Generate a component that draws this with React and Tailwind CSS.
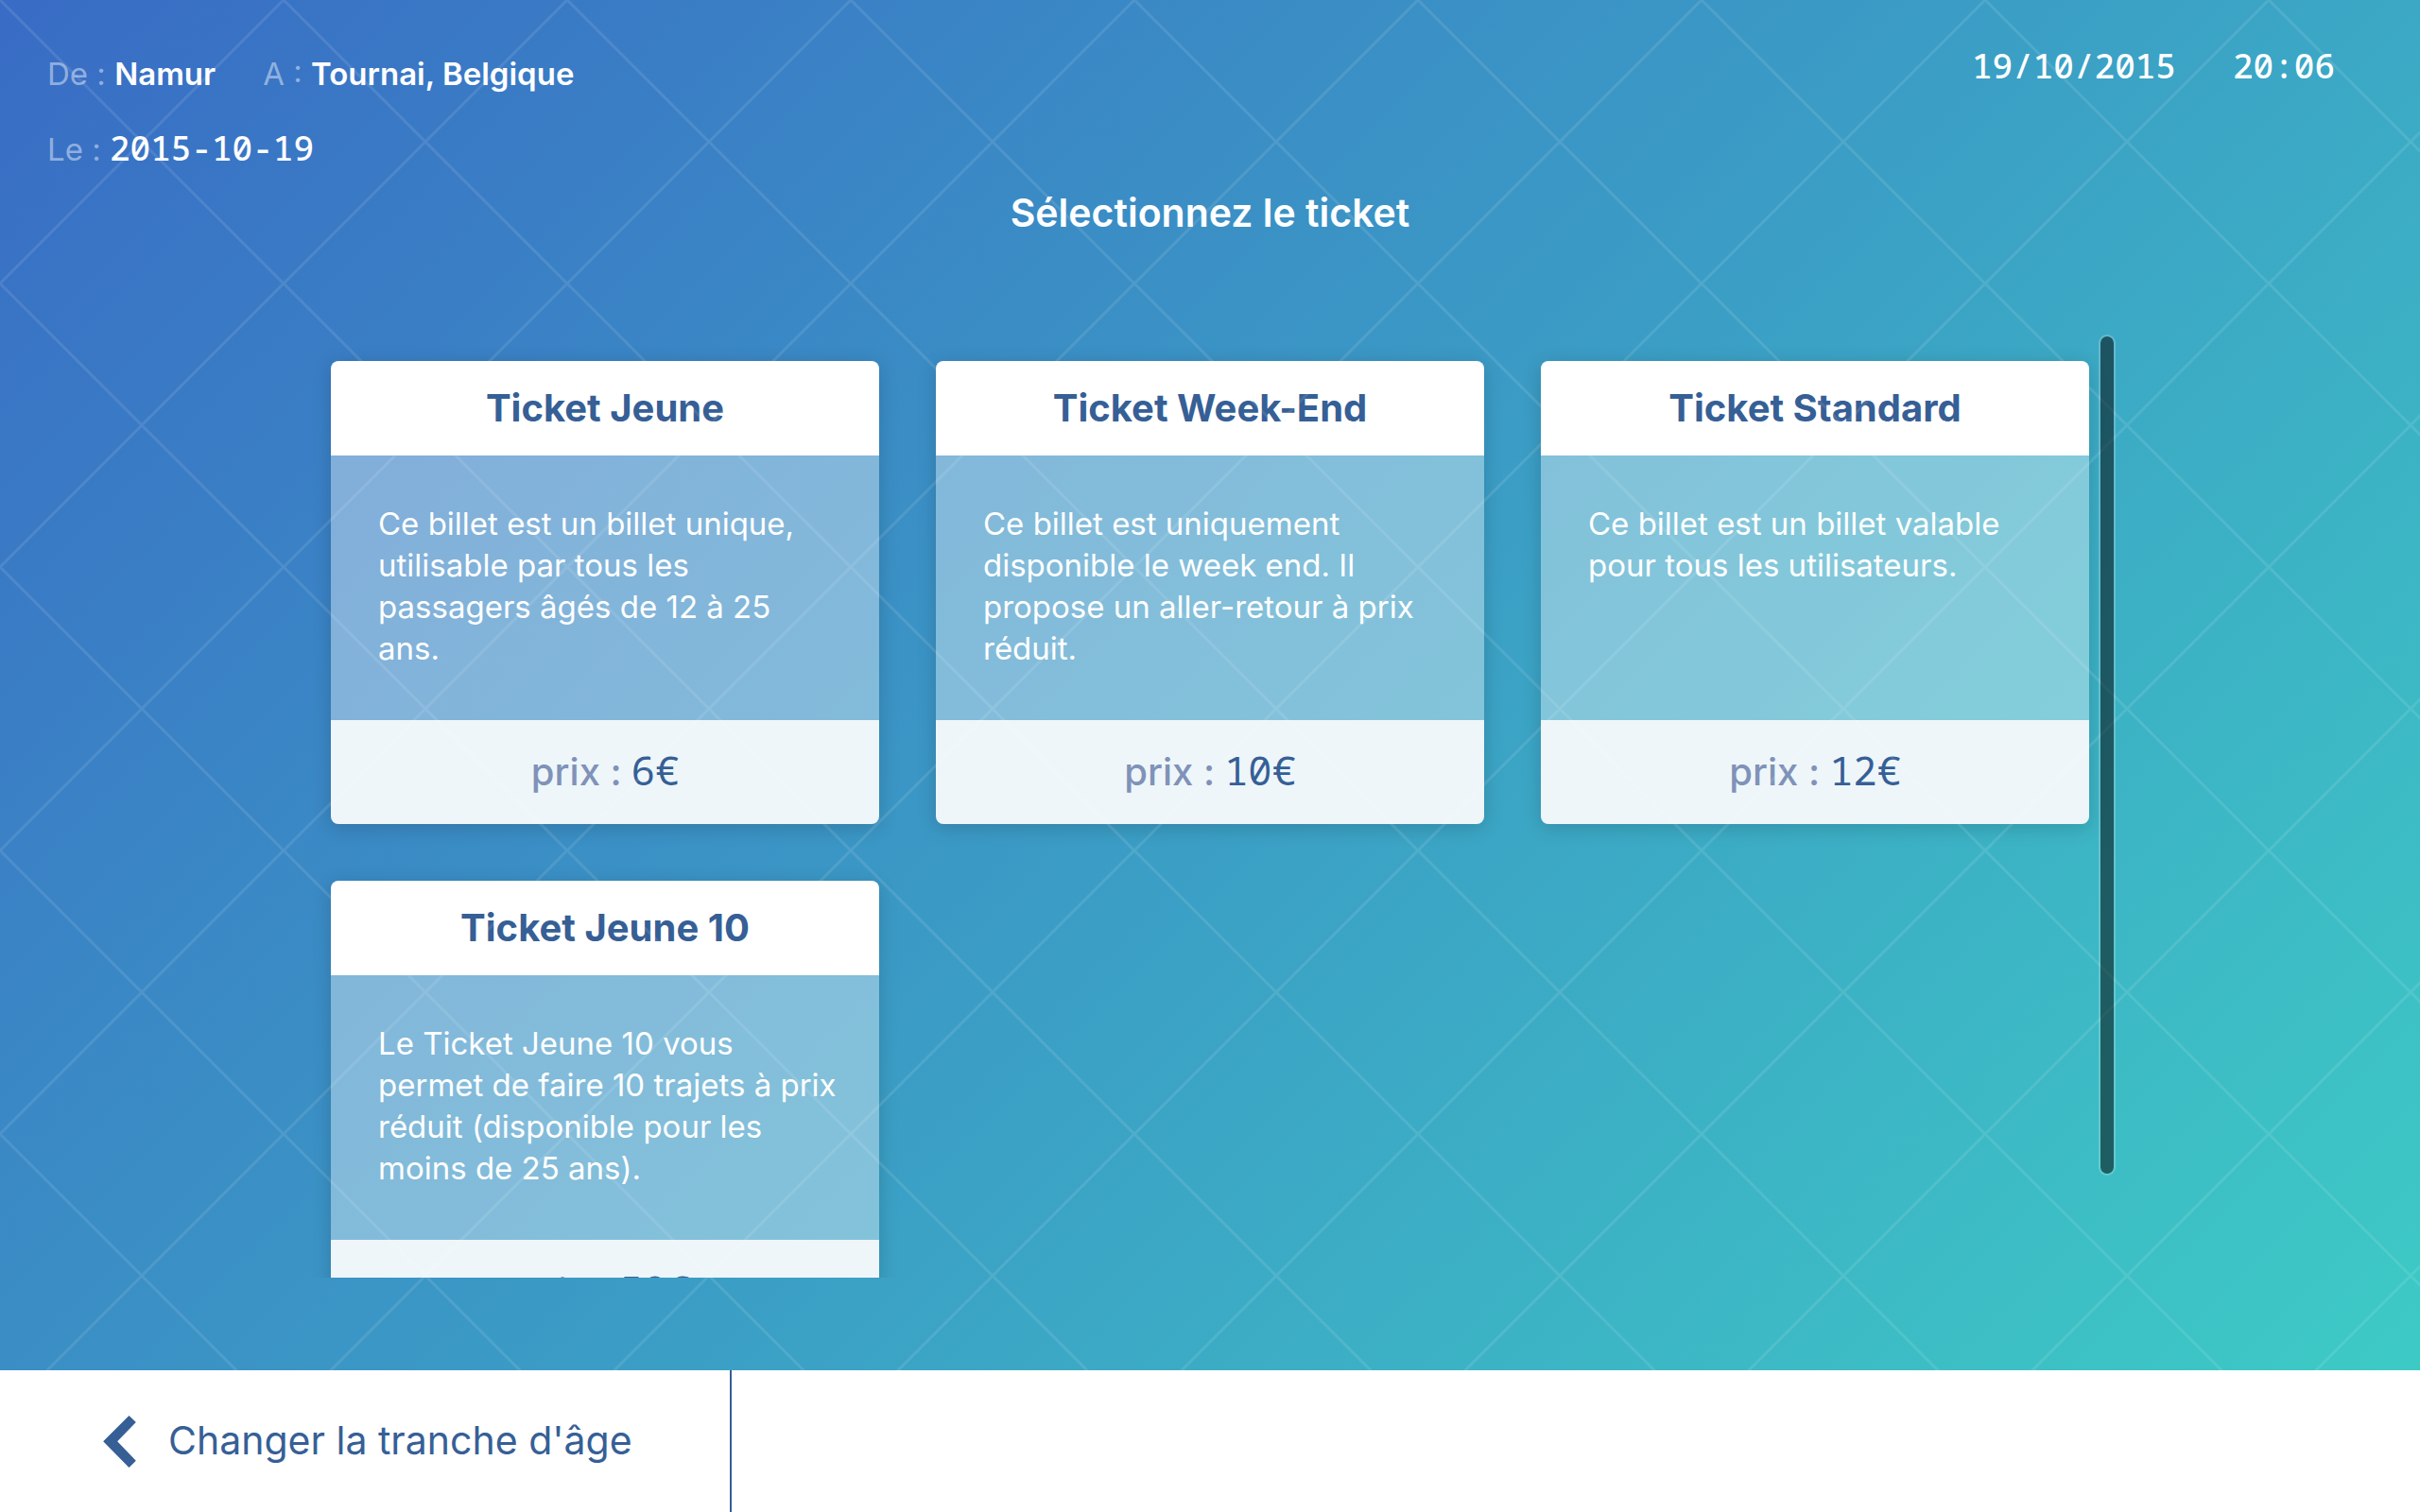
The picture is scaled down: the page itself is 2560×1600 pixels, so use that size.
import React from "react";

const TICKETS = [
  {
    title: "Ticket Jeune",
    lines: ["Ce billet est un billet unique,", "utilisable par tous les", "passagers âgés de 12 à 25", "ans."],
    price: "6€",
  },
  {
    title: "Ticket Week-End",
    lines: ["Ce billet est uniquement", "disponible le week end. Il", "propose un aller-retour à prix", "réduit."],
    price: "10€",
  },
  {
    title: "Ticket Standard",
    lines: ["Ce billet est un billet valable", "pour tous les utilisateurs."],
    price: "12€",
  },
  {
    title: "Ticket Jeune 10",
    lines: ["Le Ticket Jeune 10 vous", "permet de faire 10 trajets à prix", "réduit (disponible pour les", "moins de 25 ans)."],
    price: "50€",
  },
];

function TicketCard({ title, lines, price }) {
  return (
    <button
      type="button"
      className="flex flex-col rounded-lg text-left shadow-[0_4px_20px_rgba(0,0,0,0.16)]"
    >
      <span className="w-full rounded-t-lg bg-white text-center text-[40px] leading-[100px] font-bold text-[#365f96]">
        {title}
      </span>
      <span className="min-h-[280px] w-full bg-white/37 py-[50px] pr-8 pl-[50px] text-[33px] leading-[44px] whitespace-pre-line text-white">
        {lines.join("\n")}
      </span>
      <span className="flex w-full items-baseline justify-center gap-2.5 rounded-b-lg bg-[#eef6fa] text-[40px] leading-[110px] font-medium text-[#8092b8]">
        prix :
        <span className="font-['Noto_Sans_Mono',monospace] text-[42px] leading-[50px] font-normal text-[#365f96]">
          {price}
        </span>
      </span>
    </button>
  );
}

function Criterion({ label, children }) {
  return (
    <p className="text-[33px] leading-[80px] font-semibold text-white">
      <span className="font-normal text-white/45">{label} : </span>
      {children}
    </p>
  );
}

export default function App() {
  return (
    <div className="flex h-screen flex-col bg-white font-['Inter',sans-serif]">
      <div className="relative flex min-h-0 flex-1 flex-col bg-[linear-gradient(135deg,#396cc5,#3dcac5)]">
        <header className="flex justify-between px-[50px] pt-[38px]">
          <div>
            <div className="flex gap-[50px]">
              <Criterion label="De">Namur</Criterion>
              <Criterion label="A">Tournai, Belgique</Criterion>
            </div>
            <Criterion label="Le">
              <time className="font-['Noto_Sans_Mono',monospace] text-[36px] leading-[40px] font-medium">
                2015-10-19
              </time>
            </Criterion>
          </div>
          <div className="flex gap-[60px] pr-10 font-['Noto_Sans_Mono',monospace] text-[36px] leading-[64px] font-medium text-white">
            <time>19/10/2015</time>
            <time>20:06</time>
          </div>
        </header>

        <h1 className="text-center text-[41px] leading-[54px] font-semibold text-white">Sélectionnez le ticket</h1>

        <main className="relative mx-[12.5%] mt-[100px] mb-[98px] min-h-0 flex-1">
          <div className="h-full overflow-y-auto px-[30px] pt-[30px] [scrollbar-width:none]">
            <div className="grid grid-cols-3 gap-[60px]">
              {TICKETS.map((t) => (
                <TicketCard key={t.title} {...t} />
              ))}
            </div>
          </div>
          <div className="absolute top-0.5 right-0.5 z-20 h-[89%] w-[18px] rounded-full border-2 border-white/20 bg-black/50 bg-clip-padding" />
        </main>

        <svg className="pointer-events-none absolute inset-0 z-10 h-full w-full" aria-hidden="true">
          <defs>
            <pattern id="lattice" width="300" height="300" patternUnits="userSpaceOnUse">
              <path d="M-10-10 310 310M310-10-10 310" stroke="#fff" strokeWidth="3" fill="none" />
              <path d="M-10 290 10 310M290-10 310 10M-10 10 10-10M290 310 310 290" stroke="#fff" strokeWidth="3" fill="none" />
            </pattern>
          </defs>
          <rect width="100%" height="100%" fill="url(#lattice)" opacity="0.1" />
        </svg>
      </div>

      <footer className="flex h-[150px] bg-white">
        <button
          type="button"
          className="flex items-center gap-[34px] border-r-2 border-[#365f96] pr-[103px] pl-[109px] text-[41px] text-[#365f96]"
        >
          <svg viewBox="0 0 104 165" className="h-[55px] w-[35px]" fill="currentColor" aria-hidden="true">
            <polygon points="0,82 82,0 104,21 45,82 104,143 82,165" />
          </svg>
          <span>Changer la tranche d'âge</span>
        </button>
      </footer>
    </div>
  );
}
